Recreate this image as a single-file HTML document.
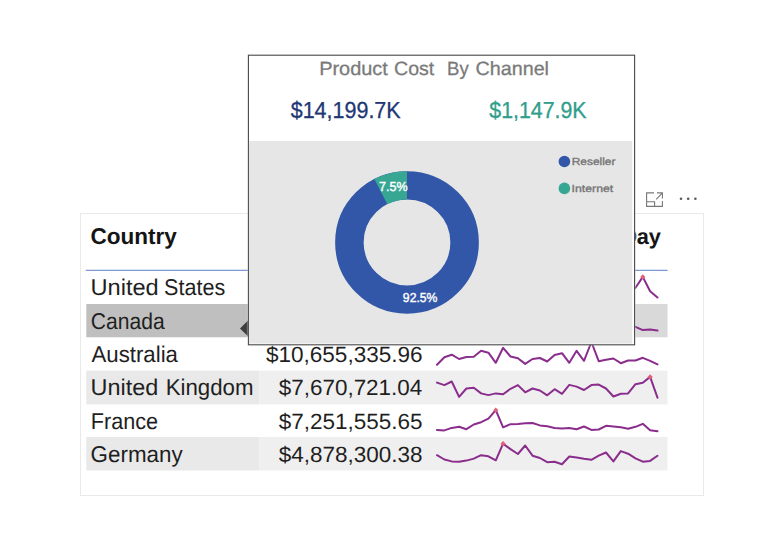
<!DOCTYPE html>
<html><head><meta charset="utf-8">
<style>
html,body{margin:0;padding:0;background:#fff;}
body{width:780px;height:555px;position:relative;overflow:hidden;font-family:"Liberation Sans",sans-serif;}
.abs{position:absolute;}
.t{position:absolute;left:0;top:0;text-rendering:geometricPrecision;white-space:nowrap;line-height:1;transform-origin:0 0;}
#card{left:80px;top:213px;width:622px;height:281px;border:1px solid #e9e9e9;box-sizing:content-box;background:#fff;}
</style></head><body>
<!-- card -->
<div id="card" class="abs"></div>
<!-- header line -->
<svg class="abs" style="left:80px;top:266px;" width="600" height="8" viewBox="80 266 600 8"><rect x="85.8" y="269.75" width="581.8" height="1.2" fill="#7893d0"/></svg>
<!-- rows -->
<svg class="abs" style="left:80px;top:300px;" width="600" height="180" viewBox="80 300 600 180">
<rect x="86.3" y="304" width="173.2" height="33.3" fill="#bfbfbf"/>
<rect x="259.5" y="304" width="408" height="33.3" fill="#d9d9d9"/>
<rect x="86.3" y="370.6" width="173.2" height="33.8" fill="#e9e9e9"/>
<rect x="259.5" y="370.6" width="408" height="33.8" fill="#efefef"/>
<rect x="86.3" y="437" width="173.2" height="33.5" fill="#e9e9e9"/>
<rect x="259.5" y="437" width="408" height="33.5" fill="#efefef"/>
</svg>
<div class="t" id="h1" style="font-size:22.8px;color:#151515;font-weight:bold;transform:translate(90.46px,224.95px) scaleX(0.9878);">Country</div>
<div class="t" id="h3" style="font-size:22.0px;color:#151515;font-weight:bold;transform:translate(636.71px,225.53px) scaleX(0.9895);">ay</div>
<div class="t" id="h3b" style="font-size:22.0px;color:#151515;font-weight:bold;transform:translate(525.90px,225.53px) scaleX(1.0000);">Sales by D</div>
<div class="t" id="c1a" style="font-size:22.8px;color:#1f1f1f;transform:translate(90.48px,276.45px) scaleX(1.0359);">United</div>
<div class="t" id="c1b" style="font-size:22.8px;color:#1f1f1f;transform:translate(164.11px,276.45px) scaleX(0.9450);">States</div>
<div class="t" id="c2" style="font-size:22.8px;color:#1f1f1f;transform:translate(90.79px,310.25px) scaleX(0.9257);">Canada</div>
<div class="t" id="c3" style="font-size:22.8px;color:#1f1f1f;transform:translate(91.50px,342.80px) scaleX(0.9746);">Australia</div>
<div class="t" id="c4a" style="font-size:22.8px;color:#1f1f1f;transform:translate(90.55px,376.40px) scaleX(1.0280);">United</div>
<div class="t" id="c4b" style="font-size:22.8px;color:#1f1f1f;transform:translate(165.69px,376.40px) scaleX(0.9763);">Kingdom</div>
<div class="t" id="c5" style="font-size:22.8px;color:#1f1f1f;transform:translate(90.75px,409.90px) scaleX(0.9478);">France</div>
<div class="t" id="c6" style="font-size:22.8px;color:#1f1f1f;transform:translate(90.62px,443.30px) scaleX(0.9811);">Germany</div>
<div class="t" id="v1" style="font-size:22px;color:#1f1f1f;transform:translate(265.89px,277.38px) scaleX(1.0267);">$53,607,801.21</div>
<div class="t" id="v2" style="font-size:22px;color:#1f1f1f;transform:translate(265.89px,310.88px) scaleX(1.0250);">$14,377,925.60</div>
<div class="t" id="v3" style="font-size:22px;color:#1f1f1f;transform:translate(265.89px,343.53px) scaleX(1.0251);">$10,655,335.96</div>
<div class="t" id="v4" style="font-size:22px;color:#1f1f1f;transform:translate(278.74px,377.18px) scaleX(1.0204);">$7,670,721.04</div>
<div class="t" id="v5" style="font-size:22px;color:#1f1f1f;transform:translate(278.74px,410.68px) scaleX(1.0222);">$7,251,555.65</div>
<div class="t" id="v6" style="font-size:22px;color:#1f1f1f;transform:translate(278.74px,443.88px) scaleX(1.0222);">$4,878,300.38</div>
<!-- sparklines -->
<svg class="abs" id="sp" style="left:0;top:0;" width="780" height="555" viewBox="0 0 780 555">
<g fill="none" stroke="#8a2d8c" stroke-width="2" stroke-linejoin="round" stroke-linecap="round">
<polyline points="437.0,295.0 444.4,290.0 451.7,293.0 459.1,288.0 466.4,292.0 473.8,289.0 481.1,294.0 488.4,291.0 495.8,287.0 503.1,293.0 510.5,290.0 517.9,295.0 525.2,289.0 532.5,292.0 539.9,294.0 547.2,288.0 554.6,291.0 562.0,293.0 569.3,290.0 576.6,286.0 584.0,292.0 591.4,289.0 598.7,294.0 606.0,291.0 613.4,288.0 620.8,293.0 628.1,290.0 635.5,287.8 642.8,276.9 650.1,291.3 657.5,297.5"/>
<polyline points="437.0,325.0 444.4,327.0 451.7,324.0 459.1,328.0 466.4,326.0 473.8,329.0 481.1,325.0 488.4,327.0 495.8,328.0 503.1,324.0 510.5,326.0 517.9,329.0 525.2,327.0 532.5,325.0 539.9,328.0 547.2,326.0 554.6,324.0 562.0,327.0 569.3,329.0 576.6,325.0 584.0,328.0 591.4,326.0 598.7,327.0 606.0,324.0 613.4,328.0 620.8,326.0 628.1,325.0 635.5,326.9 642.8,330.1 650.1,329.5 657.5,330.6"/>
<polyline points="437.0,364.7 444.4,357.3 451.7,354.7 459.1,359.0 466.4,357.0 473.8,356.7 481.1,350.8 488.4,352.7 495.8,362.8 503.1,347.8 510.5,356.5 517.9,358.2 525.2,363.9 532.5,359.0 539.9,358.0 547.2,361.5 554.6,355.0 562.0,353.2 569.3,362.8 576.6,350.8 584.0,360.8 591.4,342.0 598.7,361.2 606.0,359.8 613.4,358.5 620.8,363.2 628.1,360.5 635.5,360.5 642.8,357.8 650.1,360.8 657.5,364.4"/>
<polyline points="437.0,382.6 444.4,385.1 451.7,381.5 459.1,396.9 466.4,388.5 473.8,387.7 481.1,393.4 488.4,395.1 495.8,393.4 503.1,394.2 510.5,388.8 517.9,385.1 525.2,392.3 532.5,388.5 539.9,390.5 547.2,395.3 554.6,389.2 562.0,393.8 569.3,384.9 576.6,386.6 584.0,390.0 591.4,385.1 598.7,384.6 606.0,388.5 613.4,396.5 620.8,393.8 628.1,393.4 635.5,384.2 642.8,382.8 650.1,376.9 657.5,397.7"/>
<polyline points="437.0,429.9 444.4,430.4 451.7,427.9 459.1,426.8 466.4,429.2 473.8,424.5 481.1,422.2 488.4,418.7 495.8,410.2 503.1,427.3 510.5,424.2 517.9,424.1 525.2,423.3 532.5,423.0 539.9,425.4 547.2,426.3 554.6,427.9 562.0,428.4 569.3,427.9 576.6,429.2 584.0,426.5 591.4,429.9 598.7,429.5 606.0,425.8 613.4,426.5 620.8,427.3 628.1,428.8 635.5,426.8 642.8,423.8 650.1,430.2 657.5,431.2"/>
<polyline points="437.0,455.2 444.4,459.5 451.7,461.4 459.1,461.8 466.4,460.6 473.8,458.6 481.1,455.2 488.4,456.3 495.8,460.3 503.1,443.7 510.5,449.1 517.9,454.0 525.2,445.5 532.5,455.7 539.9,458.0 547.2,462.2 554.6,461.7 562.0,464.2 569.3,456.5 576.6,457.5 584.0,458.8 591.4,459.8 598.7,455.7 606.0,452.5 613.4,461.4 620.8,451.1 628.1,453.7 635.5,458.3 642.8,461.7 650.1,460.9 657.5,455.7"/></g><g><polygon points="642.8,274.3 645.4,276.9 642.8,279.5 640.2,276.9" fill="#e0607c"/>
<polygon points="591.4,339.4 594.0,342.0 591.4,344.6 588.8,342.0" fill="#e0607c"/>
<polygon points="650.1,374.3 652.8,376.9 650.1,379.5 647.5,376.9" fill="#e0607c"/>
<polygon points="495.8,407.6 498.4,410.2 495.8,412.8 493.2,410.2" fill="#e0607c"/>
<polygon points="503.1,441.1 505.8,443.7 503.1,446.3 500.5,443.7" fill="#e0607c"/>
</g>
</svg>

<!-- icons -->
<svg class="abs" style="left:644px;top:190px;" width="64" height="20" viewBox="644 190 64 20">
<g fill="none" stroke="#787878" stroke-width="1.1">
<path d="M654,192.9 H646.6 V206.4 H662.4 V201"/>
<path d="M646.6,201.8 H654.6 V206.4"/>
<path d="M656.2,199.3 L662.4,192.9 M657,192.9 H662.4 V198.4"/>
</g>
<g fill="#5a5a5a"><circle cx="681" cy="198.8" r="1.3"/><circle cx="688.2" cy="198.8" r="1.3"/><circle cx="695.4" cy="198.8" r="1.3"/></g>
</svg>

<!-- tooltip arrow -->
<svg class="abs" style="left:238px;top:318px;" width="12" height="20" viewBox="238 318 12 20"><polygon points="248.5,320 240,328.4 248.5,336.8" fill="#3d3d3d"/></svg>

<!-- tooltip -->
<svg class="abs" style="left:240px;top:50px;" width="400" height="300" viewBox="240 50 400 300">
<rect x="247.4" y="54.2" width="388.2" height="291.6" fill="none" stroke="#fff" stroke-opacity="0.3" stroke-width="1.2"/>
<rect x="248.4" y="55.2" width="386.2" height="289.6" fill="#fff" stroke="#474747" stroke-width="1.1"/>
<rect x="248.95" y="141" width="383.3" height="202.5" fill="#e6e6e6"/>
</svg>

<svg class="abs" style="left:320px;top:150px;" width="320" height="180" viewBox="320 150 320 180">
<g transform="translate(407 0) scale(1.008 1) translate(-407 0)"><circle cx="407" cy="242.45" r="57.15" fill="none" stroke="#3257a8" stroke-width="28.30"/>
<path d="M374.63,178.92 A71.3,71.3 0 0 1 407.00,171.15 L407.00,199.45 A43.0,43.0 0 0 0 387.48,204.14 Z" fill="#37a794"/></g>
<circle cx="564.4" cy="161.5" r="5.8" fill="#3257a8"/>
<circle cx="564.4" cy="188.4" r="5.8" fill="#37a794"/>
</svg>
<div class="t" id="tt1a" style="font-size:19.2px;color:#7a7a7a;-webkit-text-stroke:0.3px #7a7a7a;transform:translate(319.14px,59.65px) scaleX(1.0388);">Product</div>
<div class="t" id="tt1b" style="font-size:19.2px;color:#7a7a7a;-webkit-text-stroke:0.3px #7a7a7a;transform:translate(393.98px,59.65px) scaleX(1.0222);">Cost</div>
<div class="t" id="tt2a" style="font-size:19.2px;color:#7a7a7a;-webkit-text-stroke:0.3px #7a7a7a;transform:translate(447.11px,59.65px) scaleX(0.9639);">By</div>
<div class="t" id="tt2b" style="font-size:19.2px;color:#7a7a7a;-webkit-text-stroke:0.3px #7a7a7a;transform:translate(475.42px,59.65px) scaleX(1.0296);">Channel</div>
<div class="t" id="tv1" style="font-size:23.2px;color:#1f3875;-webkit-text-stroke:0.3px #1f3875;transform:translate(290.71px,99.01px) scaleX(0.9269);">$14,199.7K</div>
<div class="t" id="tv2" style="font-size:23.2px;color:#2f9e8b;-webkit-text-stroke:0.3px #2f9e8b;transform:translate(489.27px,99.01px) scaleX(0.9202);">$1,147.9K</div>
<div class="t" id="l1" style="font-size:13px;color:#fff;-webkit-text-stroke:0.4px #fff;transform:translate(379.04px,179.75px) scaleX(0.9643);">7.5%</div>
<div class="t" id="l2" style="font-size:13px;color:#fff;-webkit-text-stroke:0.4px #fff;transform:translate(402.85px,291.05px) scaleX(0.9376);">92.5%</div>
<div class="t" id="lg1" style="font-size:10.3px;color:#757575;-webkit-text-stroke:0.35px #757575;transform:translate(571.67px,158.18px) scaleX(1.1581);">Reseller</div>
<div class="t" id="lg2" style="font-size:10.3px;color:#757575;-webkit-text-stroke:0.35px #757575;transform:translate(571.56px,185.08px) scaleX(1.1927);">Internet</div>
</body></html>
